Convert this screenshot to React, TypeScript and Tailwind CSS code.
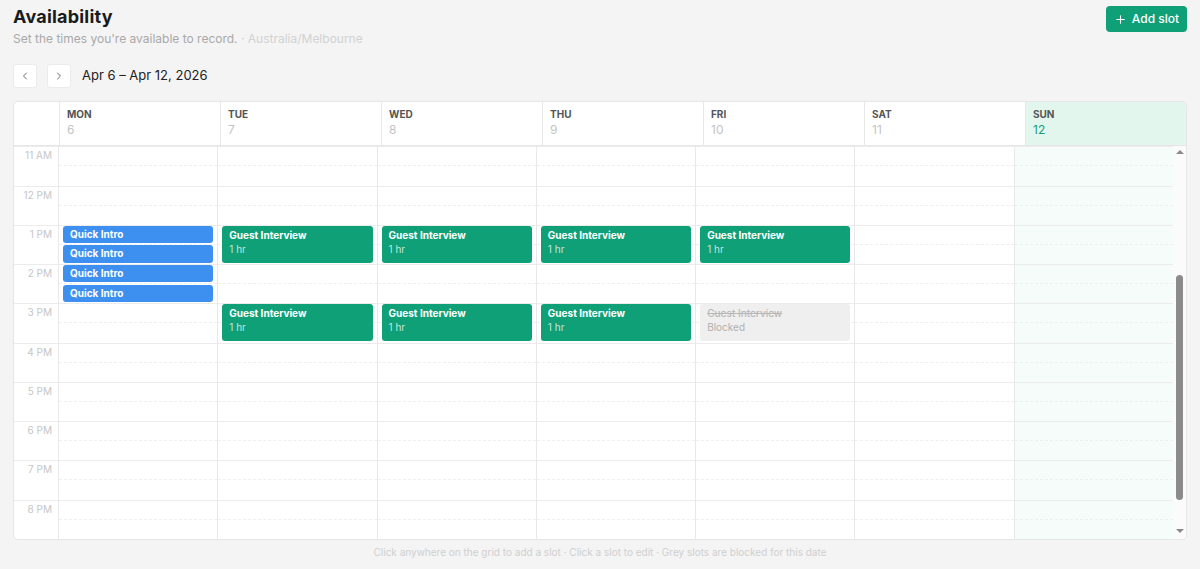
import { ChevronLeft, ChevronRight, Plus } from "lucide-react";

const HOUR = 39.25;
const START = 6;
const END = 22;

type Slot = {
  day: number;
  start: number; // hours, e.g. 13.5
  len: number; // hours
  kind: "intro" | "interview" | "blocked";
};

const days = [
  { name: "MON", num: 6 },
  { name: "TUE", num: 7 },
  { name: "WED", num: 8 },
  { name: "THU", num: 9 },
  { name: "FRI", num: 10 },
  { name: "SAT", num: 11 },
  { name: "SUN", num: 12, today: true },
];

const slots: Slot[] = [
  { day: 0, start: 13, len: 0.5, kind: "intro" },
  { day: 0, start: 13.5, len: 0.5, kind: "intro" },
  { day: 0, start: 14, len: 0.5, kind: "intro" },
  { day: 0, start: 14.5, len: 0.5, kind: "intro" },
  { day: 1, start: 13, len: 1, kind: "interview" },
  { day: 2, start: 13, len: 1, kind: "interview" },
  { day: 3, start: 13, len: 1, kind: "interview" },
  { day: 4, start: 13, len: 1, kind: "interview" },
  { day: 1, start: 15, len: 1, kind: "interview" },
  { day: 2, start: 15, len: 1, kind: "interview" },
  { day: 3, start: 15, len: 1, kind: "interview" },
  { day: 4, start: 15, len: 1, kind: "blocked" },
];

const hours = Array.from({ length: END - START }, (_, i) => START + i);

function label(h: number) {
  const suffix = h >= 12 ? "PM" : "AM";
  const n = h % 12 === 0 ? 12 : h % 12;
  return `${n} ${suffix}`;
}

function SlotBlock({ slot }: { slot: Slot }) {
  const top = (slot.start - START) * HOUR + 1;
  const height = slot.len * HOUR - 2.5;
  const pos = { top, height };

  if (slot.kind === "intro") {
    return (
      <div
        style={pos}
        className="absolute left-[4px] right-[4px] flex items-center rounded-[3px] bg-[#3d8ff0] px-[7px] text-[10px] font-bold text-white"
      >
        Quick Intro
      </div>
    );
  }
  if (slot.kind === "blocked") {
    return (
      <div
        style={pos}
        className="absolute left-[4px] right-[4px] rounded-[3px] bg-[#efefef] px-[7px] pt-[2px]"
      >
        <p className="text-[10px] leading-[14px] font-medium text-[#b8b8b8] line-through">Guest Interview</p>
        <p className="text-[10px] leading-[14px] text-[#b0b0b0]">Blocked</p>
      </div>
    );
  }
  return (
    <div
      style={pos}
      className="absolute left-[4px] right-[4px] rounded-[3px] bg-[#10a078] px-[7px] pt-[2px]"
    >
      <p className="text-[10px] leading-[14px] font-bold text-white">Guest Interview</p>
      <p className="text-[10px] leading-[14px] text-white/75">1 hr</p>
    </div>
  );
}

// drawn scrollbar, the sandbox browser hides its native one
function FakeScrollbar() {
  return (
    <div className="flex w-[13px] shrink-0 flex-col items-center bg-[#fbfbfb]">
      <span className="mt-[4px] h-0 w-0 border-x-[4px] border-b-[4px] border-x-transparent border-b-[#8a8a8a]" />
      <div className="mt-[121px] h-[225px] w-[7px] rounded-full bg-[#8b8b8b]" />
      <span className="mt-auto mb-[6px] h-0 w-0 border-x-[4px] border-t-[4px] border-x-transparent border-t-[#8a8a8a]" />
    </div>
  );
}

export default function App() {
  return (
    <main className="min-h-screen bg-[#f4f4f4] px-[13px] pt-[4px] font-['Inter',sans-serif] text-[#222]">
      <div className="flex items-start justify-between">
        <div>
          <h1 className="text-[18px] leading-[26px] font-bold tracking-[0.2px] text-[#1b1b1b]">
            Availability
          </h1>
          <p className="mt-[1px] text-[12px] leading-[16px] text-[#a9a9a9]">
            Set the times you're available to record.{" "}
            <span className="text-[#d2d2d2]">· Australia/Melbourne</span>
          </p>
        </div>
        <button className="mt-[2px] flex h-[26px] w-[81px] items-center justify-center gap-[5px] rounded-[4px] bg-[#10a078] text-[12px] font-medium text-white">
          <Plus size={13} strokeWidth={2} />
          Add slot
        </button>
      </div>

      <div className="mt-[17px] flex items-center gap-[11px]">
        <button className="flex h-[24px] w-[24px] items-center justify-center rounded-[3px] border border-[#ebebeb] bg-white text-[#555]">
          <ChevronLeft size={12} strokeWidth={1.75} />
        </button>
        <button className="-ml-[1px] flex h-[24px] w-[24px] items-center justify-center rounded-[3px] border border-[#ebebeb] bg-white text-[#555]">
          <ChevronRight size={12} strokeWidth={1.75} />
        </button>
        <span className="text-[13px] text-[#222]">Apr 6 – Apr 12, 2026</span>
      </div>

      <div className="mt-[13px] overflow-hidden rounded-[5px] border border-[#e6e6e6] bg-white">
        <div className="flex h-[44px] border-b border-[#e6e6e6]">
          <div className="w-[45px] shrink-0" />
          {days.map((d) => (
            <div
              key={d.name}
              className={`flex-1 border-l border-[#e8e8e8] pl-[7px] pt-[6px] ${d.today ? "bg-[#e3f6ee]" : ""}`}
            >
              <p className="text-[10px] leading-[12px] font-bold text-[#555]">{d.name}</p>
              <p className={`mt-[3px] text-[12px] leading-[14px] ${d.today ? "text-[#159e74]" : "text-[#c4c4c4]"}`}>
                {d.num}
              </p>
            </div>
          ))}
        </div>

        <div className="flex h-[393px]">
          <div
            className="flex-1 overflow-y-scroll [scrollbar-width:none]"
            ref={(el) => {
              if (el) el.scrollTop = (11 - START) * HOUR;
            }}
          >
            <div className="flex">
              <div className="w-[45px] shrink-0 border-r border-[#e8e8e8]">
                {hours.map((h) => (
                  <div
                    key={h}
                    style={{ height: HOUR }}
                    className="border-t border-[#ececec] pr-[6px] pt-[2px] text-right text-[10px] leading-[12px] text-[#c6c6c6]"
                  >
                    {label(h)}
                  </div>
                ))}
              </div>
              {days.map((d, i) => (
                <div
                  key={d.name}
                  className={`relative flex-1 ${i > 0 ? "border-l border-[#e8e8e8]" : ""} ${d.today ? "bg-[#f6fcf9]" : ""}`}
                >
                  {hours.map((h) => (
                    <div key={h} style={{ height: HOUR }} className="border-t border-[#ececec]">
                      <div className="h-1/2 border-b border-dashed border-[#efefef]" />
                    </div>
                  ))}
                  {slots
                    .filter((s) => s.day === i)
                    .map((s, k) => (
                      <SlotBlock key={k} slot={s} />
                    ))}
                </div>
              ))}
            </div>
          </div>
          <FakeScrollbar />
        </div>
      </div>

      <p className="mt-[6px] text-center text-[10px] leading-[12px] text-[#cfcfcf]">
        Click anywhere on the grid to add a slot · Click a slot to edit · Grey slots are blocked for this date
      </p>
    </main>
  );
}
